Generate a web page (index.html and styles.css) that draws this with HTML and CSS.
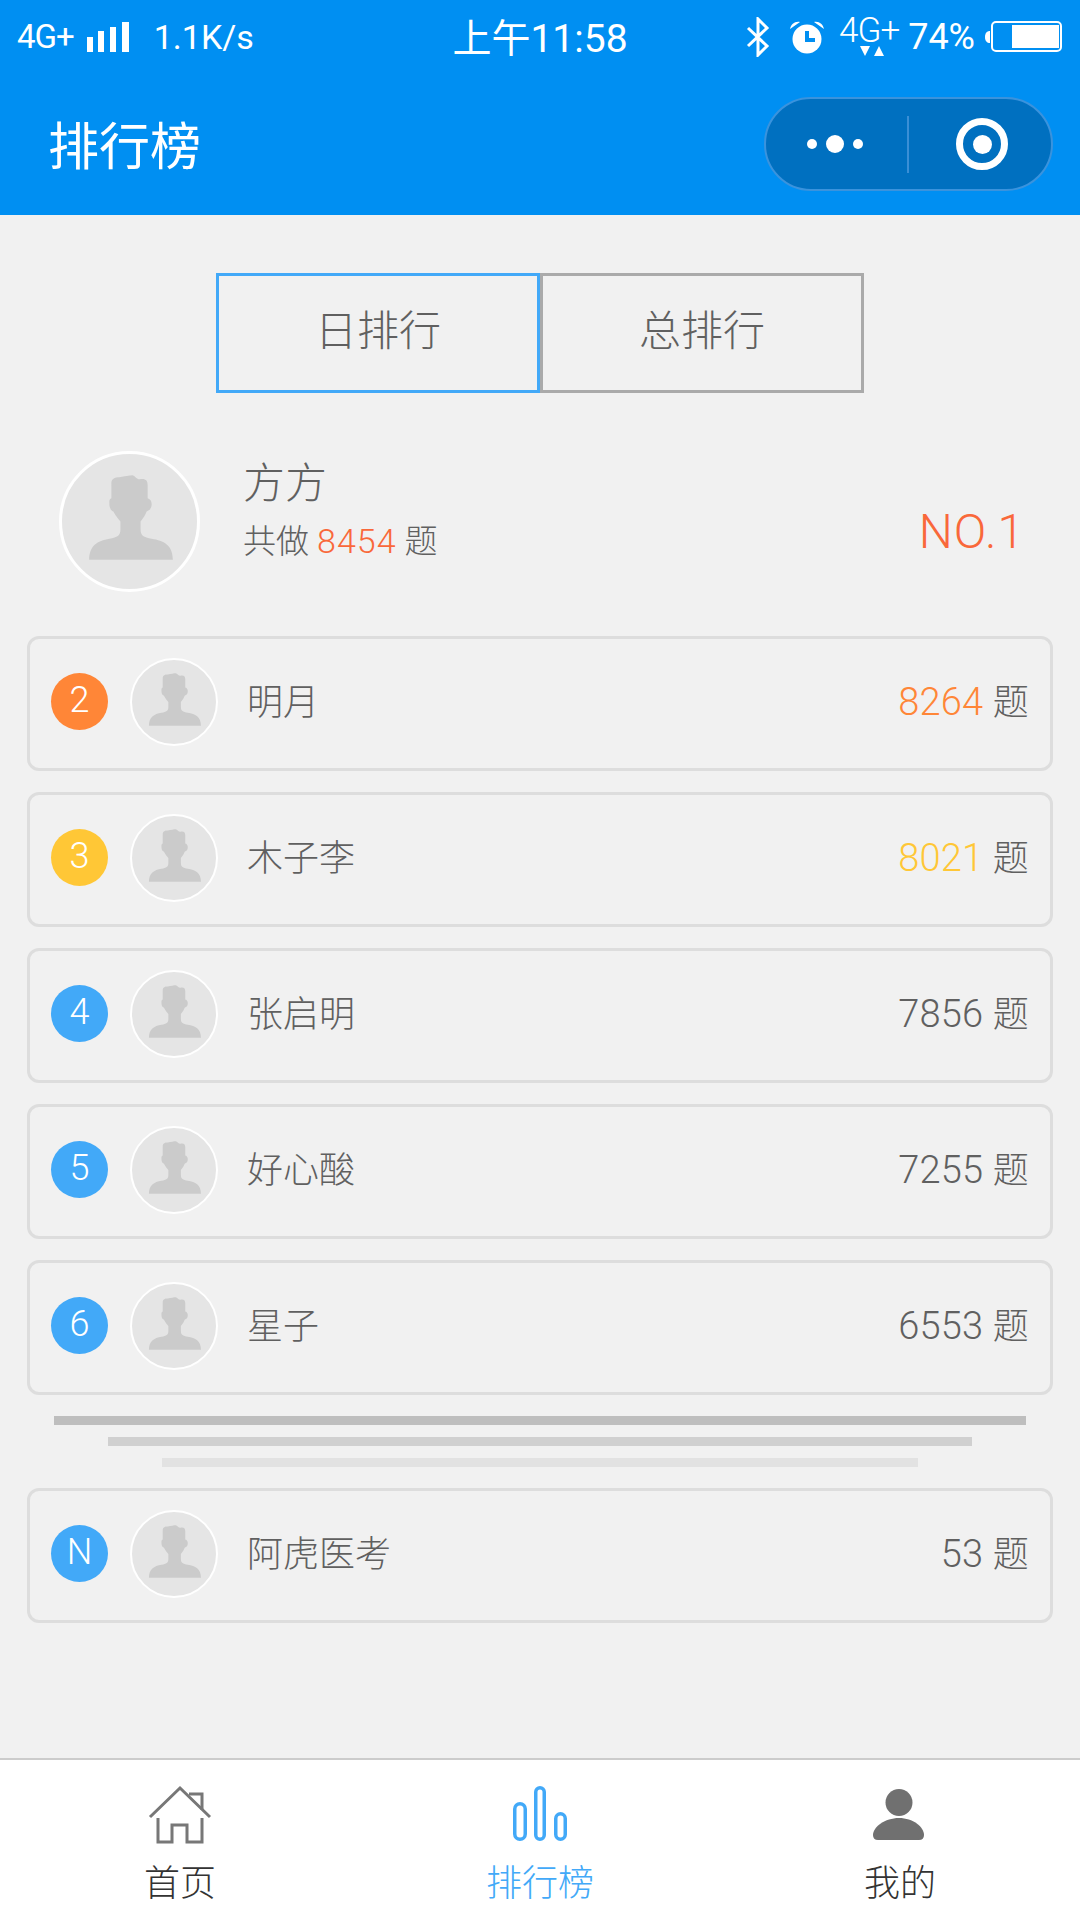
FILE: index.html
```html
<!DOCTYPE html>
<html lang="zh-CN">
  <head>
    <meta charset="UTF-8" />
    <meta name="viewport" content="width=device-width, initial-scale=1.0" />
    <title>排行榜</title>
    <link rel="stylesheet" href="styles.css">
  </head>
  <body>
    <svg class="defs" width="0" height="0">
      <symbol id="person" viewBox="3 3 134 134">
        <path d="M30 108C30 94 38 89 50 87C58 86 61 84 61 78L61 70C57 65 55 62 54 60C51 59 50 56 50 52C50 49 50 48 52 47L52 32C52 27 56 26 60 26C65 25 70 24 73 24C76 25 77 28 80 28C86 27 88 29 88 34L88 47C91 48 92 50 92 53C92 57 90 59 87 60C86 63 84 66 81 70L81 78C81 84 84 86 92 87C104 89 113 93 113 108Z" />
      </symbol>
    </svg>

    <div class="app">
      <header class="header">
        <div class="status">
          <div class="status-left">
            <span class="net">4G+</span>
            <svg class="signal" width="42" height="30" viewBox="0 0 42 30">
              <rect x="0" y="15" width="6" height="15" />
              <rect x="11" y="9" width="6" height="21" />
              <rect x="23" y="5" width="6" height="25" />
              <rect x="35" y="0" width="7" height="30" />
            </svg>
            <span class="speed">1.1K/s</span>
          </div>
          <div class="time">上午11:58</div>
          <div class="status-right">
            <svg class="bt" width="24" height="40" viewBox="0 0 24 40">
              <path d="M2 11L21 29L12 38V2L21 11L2 29" />
            </svg>
            <svg class="alarm" width="36" height="34" viewBox="0 0 36 34">
              <circle cx="18" cy="19" r="14.500" fill="#fff" />
              <path d="M1 9C2 4 6 1 11 2ZM35 9C34 4 30 1 25 2Z" fill="#fff" />
              <path d="M18 11V20H26" fill="none" stroke="#008ff2" stroke-width="4" />
            </svg>
            <div class="net-stack">
              <span class="net-top">4G+</span>
              <svg width="24" height="11" viewBox="0 0 24 11">
                <path d="M0 0H10L5 10ZM14 10L19 0L24 10Z" fill="#fff" />
              </svg>
            </div>
            <span class="battery-pct">74%</span>
            <svg class="battery" width="77" height="32" viewBox="0 0 77 32">
              <path d="M5 10V22C2 22 0 20 0 16C0 12 2 10 5 10Z" fill="#fff" />
              <rect x="7" y="1" width="69" height="29" rx="4" fill="none" stroke="#fff" stroke-width="2" />
              <rect x="27" y="4" width="47" height="23" fill="#fff" />
            </svg>
          </div>
        </div>
        <div class="nav">
          <h1 class="title">排行榜</h1>
          <div class="capsule">
            <div class="capsule-more">
              <i class="dot"></i>
              <i class="dot big"></i>
              <i class="dot"></i>
            </div>
            <i class="capsule-line"></i>
            <div class="capsule-close"><i></i></div>
          </div>
        </div>
      </header>

      <main class="main">
        <div class="tabs">
          <div class="tab active">日排行</div>
          <div class="tab">总排行</div>
        </div>

        <section class="top-user">
          <svg class="avatar large"><use href="#person" /></svg>
          <div class="top-info">
            <div class="top-name">方方</div>
            <div class="top-count">共做 <span class="hot">8454</span> 题</div>
          </div>
          <div class="top-rank">NO.1</div>
        </section>

        <ul class="rank-list">
          <li class="row">
            <span class="badge orange">2</span>
            <svg class="avatar"><use href="#person" /></svg>
            <span class="name">明月</span>
            <span class="score"><span class="num-orange">8264</span> <span class="unit">题</span></span>
          </li>
          <li class="row">
            <span class="badge yellow">3</span>
            <svg class="avatar"><use href="#person" /></svg>
            <span class="name">木子李</span>
            <span class="score"><span class="num-yellow">8021</span> <span class="unit">题</span></span>
          </li>
          <li class="row">
            <span class="badge">4</span>
            <svg class="avatar"><use href="#person" /></svg>
            <span class="name">张启明</span>
            <span class="score">7856 <span class="unit">题</span></span>
          </li>
          <li class="row">
            <span class="badge">5</span>
            <svg class="avatar"><use href="#person" /></svg>
            <span class="name">好心酸</span>
            <span class="score">7255 <span class="unit">题</span></span>
          </li>
          <li class="row">
            <span class="badge">6</span>
            <svg class="avatar"><use href="#person" /></svg>
            <span class="name">星子</span>
            <span class="score">6553 <span class="unit">题</span></span>
          </li>
        </ul>

        <div class="more-bars">
          <i class="bar bar-1"></i>
          <i class="bar bar-2"></i>
          <i class="bar bar-3"></i>
        </div>

        <div class="row">
          <span class="badge">N</span>
          <svg class="avatar"><use href="#person" /></svg>
          <span class="name">阿虎医考</span>
          <span class="score">53 <span class="unit">题</span></span>
        </div>
      </main>

      <nav class="tabbar">
        <a class="tabbar-item">
          <svg width="70" height="60" viewBox="0 0 70 60" fill="none" stroke="#777" stroke-width="3">
            <path d="M5 32L35 3L65 32" />
            <path d="M44 9H57V25" />
            <path d="M13 33V57H27V40H42V57H57V33" />
          </svg>
          <span>首页</span>
        </a>
        <a class="tabbar-item current">
          <svg width="70" height="60" viewBox="0 0 70 60" fill="none" stroke="#42a9f8" stroke-width="3.500">
            <rect x="9.750" y="18.750" width="10.500" height="35.500" rx="5.250" />
            <rect x="30.750" y="2.750" width="8.500" height="51.500" rx="4.250" />
            <rect x="50.750" y="28.750" width="9.500" height="25.500" rx="4.750" />
          </svg>
          <span>排行榜</span>
        </a>
        <a class="tabbar-item">
          <svg width="70" height="60" viewBox="0 0 70 60" fill="#707070">
            <circle cx="34" cy="17.500" r="13.500" />
            <path d="M8 50C8 42 20 33 34 33C48 33 59 42 59 50Q59 55 54 55H13Q8 55 8 50Z" />
          </svg>
          <span>我的</span>
        </a>
      </nav>
    </div>
  </body>
</html>
```
FILE: styles.css
```css
/* Base styles */
* {
  box-sizing: border-box;
}
body {
  margin: 0;
  background: #f1f1f1;
  color: #606060;
  font-family: Roboto, "Noto Sans CJK SC", sans-serif;
  font-weight: 300;
}
i {
  display: block;
}
.defs {
  position: absolute;
}
.app {
  display: flex;
  flex-direction: column;
  height: 1920px;
  overflow: hidden;
}

/* Blue header with status bar */
.header {
  height: 215px;
  background: #008ff2;
  color: #fff;
}
.status {
  display: grid;
  grid-template-columns: 1fr auto 1fr;
  align-items: center;
  height: 73px;
}
.status-left {
  display: flex;
  align-items: center;
  padding-left: 17px;
}
.net {
  font-size: 33px;
  font-weight: 400;
  letter-spacing: -1px;
}
.signal {
  margin: 0 25px 0 13px;
  fill: #fff;
}
.speed {
  font-size: 34px;
  font-weight: 400;
}
.time {
  margin-top: -4px;
  font-size: 39px;
  font-weight: 400;
}
.status-right {
  display: flex;
  align-items: center;
  justify-content: flex-end;
  padding-right: 18px;
}
.bt {
  fill: none;
  stroke: #fff;
  stroke-width: 3;
}
.alarm {
  margin-left: 19px;
}
.net-stack {
  display: flex;
  flex-direction: column;
  align-items: center;
  width: 60px;
  margin-left: 14px;
  line-height: 30px;
}
.net-top {
  font-size: 35px;
  letter-spacing: -1px;
  margin-top: 0;
}
.net-stack svg {
  margin: 0 0 0 6px;
}
.battery-pct {
  margin-left: 9px;
  font-size: 36px;
  font-weight: 400;
}
.battery {
  margin-left: 10px;
}

/* Title row and capsule */
.nav {
  display: flex;
  align-items: center;
  justify-content: space-between;
  height: 142px;
  padding: 0 27px 0 48px;
}
.title {
  margin: -3px 0 0;
  font-size: 51px;
  font-weight: 400;
}
.capsule {
  display: flex;
  align-items: center;
  width: 289px;
  height: 94px;
  background: #0070c0;
  border: 2px solid #3a93dd;
  border-radius: 47px;
}
.capsule-more {
  display: flex;
  align-items: center;
  gap: 9px;
  margin-left: 41px;
}
.dot {
  width: 10px;
  height: 10px;
  background: #fff;
  border-radius: 50%;
}
.dot.big {
  width: 18px;
  height: 18px;
}
.capsule-line {
  width: 2px;
  height: 57px;
  margin-left: 44px;
  background: #3a8fd6;
}
.capsule-close {
  display: flex;
  align-items: center;
  justify-content: center;
  width: 52px;
  height: 52px;
  margin-left: 47px;
  border: 7px solid #fff;
  border-radius: 50%;
}
.capsule-close i {
  width: 19px;
  height: 19px;
  background: #fff;
  border-radius: 50%;
}

/* Day / total switch */
.main {
  flex: 1;
  padding: 58px 27px 0;
}
.tabs {
  display: flex;
  justify-content: center;
}
.tab {
  width: 324px;
  height: 120px;
  border: 3px solid #aaa;
  font-size: 42px;
  line-height: 112px;
  text-align: center;
}
.tab.active {
  border-color: #42a9f8;
}

/* First place */
.avatar {
  flex: none;
  width: 88px;
  height: 88px;
  background: #e5e5e5;
  border: 2px solid #fff;
  border-radius: 50%;
  fill: #cbcbcb;
}
.row .avatar {
  margin-top: 2px;
}
.avatar.large {
  width: 141px;
  height: 141px;
  border-width: 3px;
}
.top-user {
  display: flex;
  align-items: flex-start;
  margin-top: 58px;
  padding: 0 28px 0 32px;
}
.top-info {
  margin-left: 43px;
  padding-top: 5px;
}
.top-name {
  font-size: 42px;
  line-height: 56px;
}
.top-count {
  font-size: 33px;
  line-height: 58px;
  margin-top: 0;
}
.hot {
  font-size: 34px;
  letter-spacing: 1px;
  color: #f9683a;
}
.top-rank {
  margin: 51px 0 0 auto;
  color: #f9683a;
  font-size: 48px;
  letter-spacing: 1px;
  line-height: 60px;
}

/* Rank rows */
.rank-list {
  display: flex;
  flex-direction: column;
  gap: 21px;
  margin: 44px 0 0;
  padding: 0;
  list-style: none;
}
.row {
  display: flex;
  align-items: center;
  height: 135px;
  padding: 0 21px 5px;
  border: 3px solid #ddd;
  border-radius: 12px;
}
.badge {
  flex: none;
  width: 57px;
  height: 57px;
  margin-right: 22px;
  background: #42a9f8;
  border-radius: 50%;
  color: #fff;
  font-size: 36px;
  line-height: 55px;
  text-align: center;
}
.badge.orange {
  background: #ff8637;
}
.badge.yellow {
  background: #ffc736;
}
.name {
  margin: 0 0 4px 29px;
  font-size: 36px;
}
.score {
  margin: 0 0 4px auto;
  font-size: 38px;
  letter-spacing: 0.2px;
}
.unit {
  font-size: 36px;
}
.num-orange {
  color: #ff8637;
}
.num-yellow {
  color: #ffc736;
}

/* Fading bars between the lists */
.more-bars {
  display: flex;
  flex-direction: column;
  align-items: center;
  gap: 12px;
  margin: 21px 0;
}
.bar {
  height: 9px;
}
.bar-1 {
  width: 972px;
  background: #bebebe;
}
.bar-2 {
  width: 864px;
  background: #d0d0d0;
}
.bar-3 {
  width: 756px;
  background: #e2e2e2;
}

/* Bottom tabs */
.tabbar {
  display: flex;
  height: 162px;
  padding-top: 25px;
  background: #fff;
  border-top: 2px solid #ccc;
}
.tabbar-item {
  display: flex;
  flex: 1;
  flex-direction: column;
  align-items: center;
  color: #333;
  font-size: 36px;
  line-height: 40px;
}
.tabbar-item span {
  margin-top: 19px;
}
.tabbar-item.current {
  color: #42a9f8;
}
```
